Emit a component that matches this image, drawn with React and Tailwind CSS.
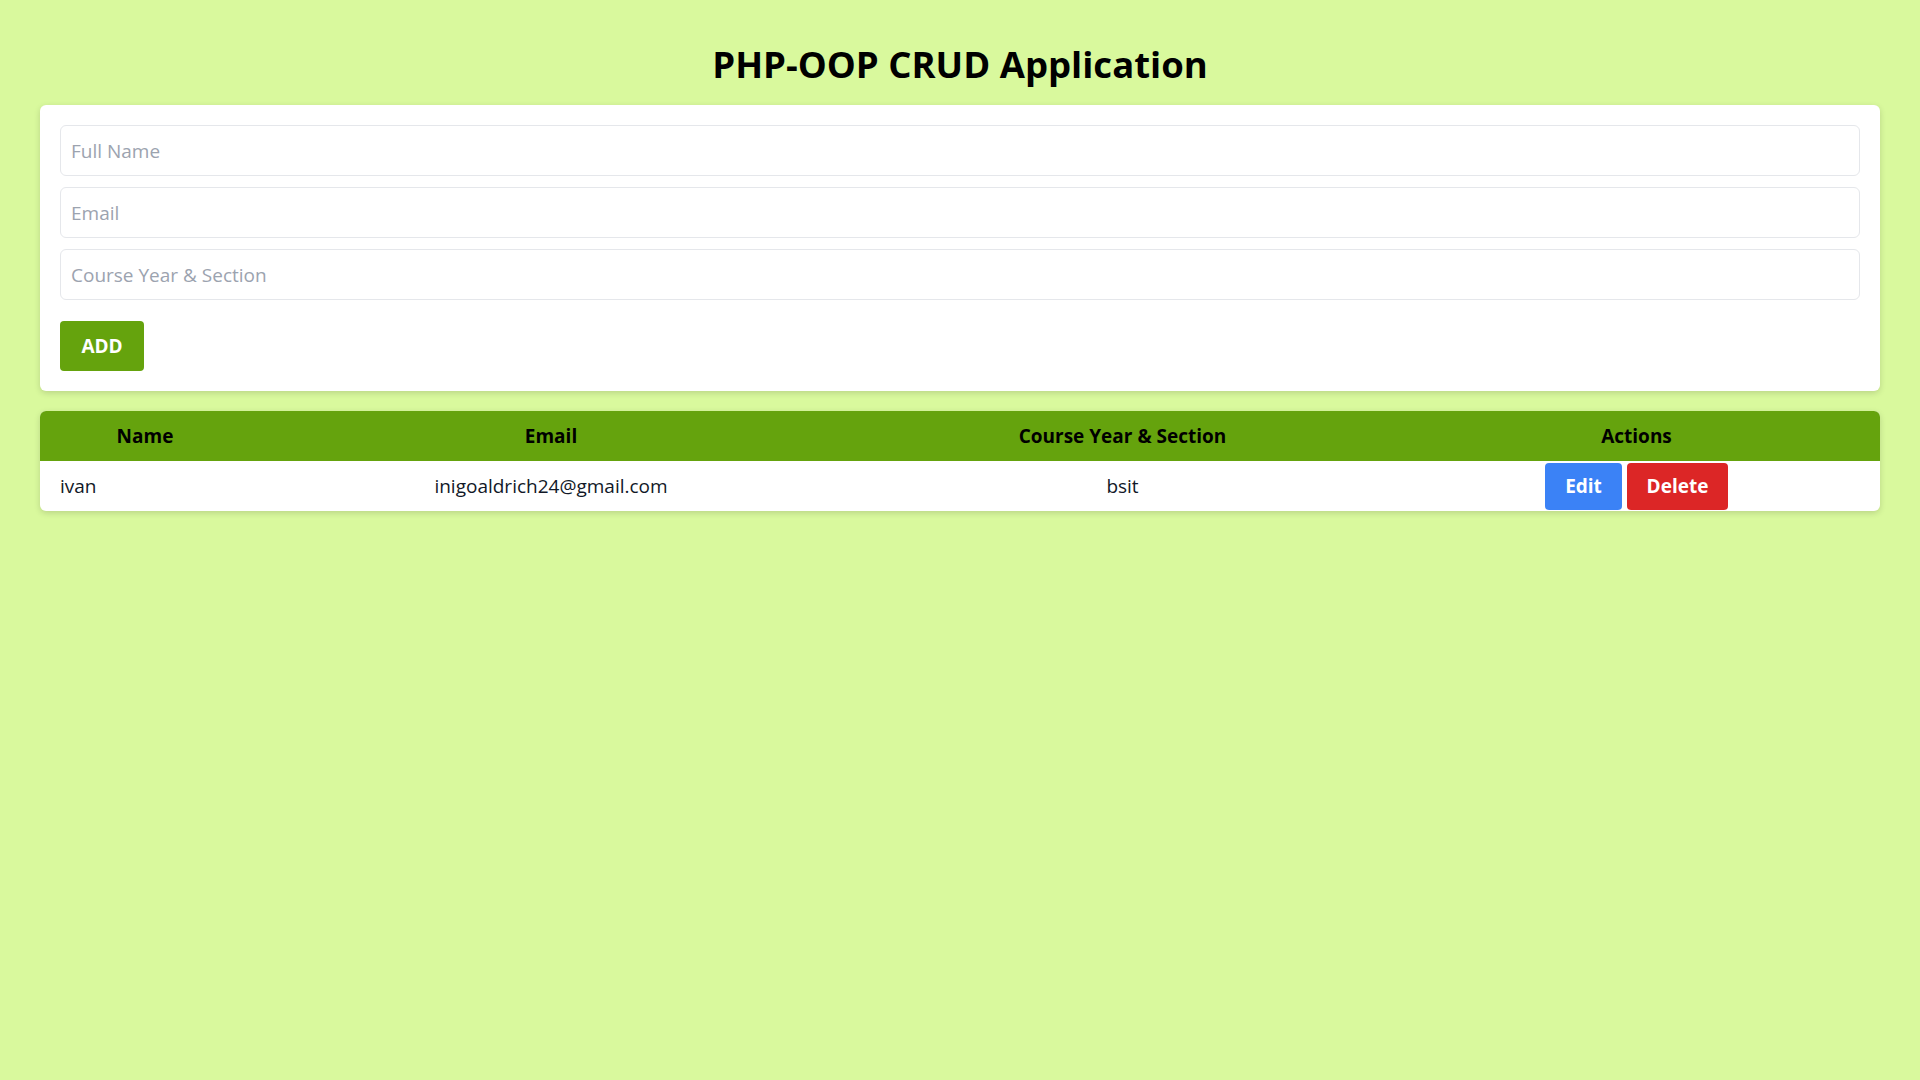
import React, { useState } from 'react';

const font = { fontFamily: '"Open Sans", "Noto Sans", sans-serif' };

const App = () => {
    const [students, setStudents] = useState([
        { id: 1, name: "ivan", email: "inigoaldrich24@gmail.com", course: "bsit" },
    ]);
    const [form, setForm] = useState({ name: "", email: "", course: "" });

    const handleChange = (e) => {
        const { name, value } = e.target;
        setForm((prev) => ({ ...prev, [name]: value }));
    };

    const handleSubmit = (e) => {
        e.preventDefault();
        if (!form.name) return;
        setStudents((prev) => [...prev, { id: Date.now(), ...form }]);
        setForm({ name: "", email: "", course: "" });
    };

    const handleDelete = (id) => {
        setStudents((prev) => prev.filter((s) => s.id !== id));
    };

    return (
        <div className="min-h-screen bg-[#d9f99d] px-10 pt-[40px] pb-10" style={font}>
            <h1 className="text-center text-[36.5px] leading-[48px] font-bold text-black mb-[17px]">
                PHP-OOP CRUD Application
            </h1>

            {/* Form */}
            <form
                onSubmit={handleSubmit}
                className="bg-white rounded-md shadow-[0_2px_6px_rgba(0,0,0,0.15)] p-5 flex flex-col gap-[11px]"
            >
                <input
                    type="text"
                    name="name"
                    value={form.name}
                    onChange={handleChange}
                    placeholder="Full Name"
                    className="w-full h-[51px] border border-[#e5e7eb] rounded-md px-[10px] text-[19px] placeholder:text-[#9ca3af] outline-none"
                />
                <input
                    type="email"
                    name="email"
                    value={form.email}
                    onChange={handleChange}
                    placeholder="Email"
                    className="w-full h-[51px] border border-[#e5e7eb] rounded-md px-[10px] text-[19px] placeholder:text-[#9ca3af] outline-none"
                />
                <input
                    type="text"
                    name="course"
                    value={form.course}
                    onChange={handleChange}
                    placeholder="Course Year & Section"
                    className="w-full h-[51px] border border-[#e5e7eb] rounded-md px-[10px] text-[19px] placeholder:text-[#9ca3af] outline-none"
                />
                <div className="pt-[10px]">
                    <button
                        type="submit"
                        className="w-[84px] h-[50px] bg-[#65a30d] text-white font-bold text-[19px] rounded"
                    >
                        ADD
                    </button>
                </div>
            </form>

            {/* Table */}
            <div className="mt-5 bg-white rounded-md overflow-hidden shadow-[0_2px_6px_rgba(0,0,0,0.15)]">
                <table className="w-full border-collapse table-fixed text-[19px]">
                    <colgroup>
                        <col className="w-[210px]" />
                        <col className="w-[602px]" />
                        <col className="w-[541px]" />
                        <col />
                    </colgroup>
                    <thead>
                        <tr className="bg-[#65a30d] h-[50px]">
                            <th className="font-bold text-black text-center">Name</th>
                            <th className="font-bold text-black text-center">Email</th>
                            <th className="font-bold text-black text-center">Course Year &amp; Section</th>
                            <th className="font-bold text-black text-center">Actions</th>
                        </tr>
                    </thead>
                    <tbody>
                        {students.map((s) => (
                            <tr key={s.id} className="h-[50px]">
                                <td className="px-5 text-left text-[#111827]">{s.name}</td>
                                <td className="text-center text-[#111827]">{s.email}</td>
                                <td className="text-center text-[#111827]">{s.course}</td>
                                <td className="text-center">
                                    <div className="flex justify-center gap-[5px]">
                                        <button className="w-[77px] h-[47px] bg-[#3b82f6] text-white font-bold rounded">
                                            Edit
                                        </button>
                                        <button
                                            onClick={() => handleDelete(s.id)}
                                            className="w-[101px] h-[47px] bg-[#dc2626] text-white font-bold rounded"
                                        >
                                            Delete
                                        </button>
                                    </div>
                                </td>
                            </tr>
                        ))}
                    </tbody>
                </table>
            </div>
        </div>
    );
};

export default App;
